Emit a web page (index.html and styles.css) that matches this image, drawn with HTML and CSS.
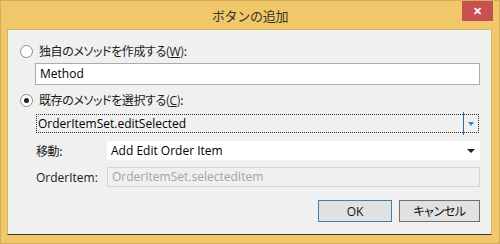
FILE: index.html
```html
<!DOCTYPE html>
<html lang="ja">
<head>
    <meta charset="UTF-8">
    <title>ボタンの追加</title>
    <link rel="stylesheet" href="styles.css">
</head>
<body>
    <div class="window">
        <div class="titlebar">
            <span class="title">ボタンの追加</span>
            <span class="close">✕</span>
        </div>
        <div class="client">
            <label class="radio-row">
                <span class="radio"></span>
                <span class="jp">独自のメソッドを作成する(<u>W</u>):</span>
            </label>
            <div class="textbox">Method</div>

            <label class="radio-row second">
                <span class="radio checked"></span>
                <span class="jp">既存のメソッドを選択する(<u>C</u>):</span>
            </label>
            <div class="combo focused">
                <span class="combo-text">OrderItemSet.editSelected</span>
                <span class="combo-btn"><span class="arrow blue"></span></span>
            </div>

            <div class="field-row move">
                <span class="field-label jp">移動:</span>
                <div class="combo plain">
                    <span class="combo-text">Add Edit Order Item</span>
                    <span class="arrow"></span>
                </div>
            </div>
            <div class="field-row item">
                <span class="field-label">OrderItem:</span>
                <div class="disabled-box">OrderItemSet.selectedItem</div>
            </div>

            <div class="buttons">
                <button class="btn default">OK</button>
                <button class="btn jp">キャンセル</button>
            </div>
        </div>
    </div>
</body>
</html>
```

FILE: styles.css
```css
body {
    margin: 0;
    font-family: "Open Sans", "Noto Sans CJK JP", sans-serif;
    font-size: 12px;
    color: #000;
}
.window {
    width: 500px;
    height: 244px;
    box-sizing: border-box;
    background: #F0C86A; /* gold frame */
    border: 1px solid #D3AD57;
    display: flex;
    flex-direction: column;
}
.titlebar {
    height: 28px;
    display: grid;
    grid-template-columns: 1fr auto 1fr;
    align-items: start;
}
.title {
    grid-column: 2;
    font-family: "Noto Sans CJK JP", sans-serif;
    font-size: 13px;
    color: #3a3226;
    line-height: 30px;
    letter-spacing: -0.3px;
}
.close {
    grid-column: 3;
    justify-self: end;
    margin-right: 6px;
    width: 31px;
    height: 20px;
    background: #C75050;
    color: #fff;
    font-size: 11px;
    font-weight: bold;
    text-align: center;
    line-height: 20px;
}
.client {
    margin: 0 7px 8px 6px;
    flex: 1;
    background: #F0F0F0;
    border: 1px solid #D7B463;
    border-bottom: 1px solid #3a3630;
    padding: 13px 11px 0 12px;
    display: flex;
    flex-direction: column;
}
.jp {
    font-family: "Noto Sans CJK JP", sans-serif;
    font-feature-settings: "palt";
    letter-spacing: -0.4px;
}
.jp u {
    font-family: "Open Sans", sans-serif;
}
.radio-row {
    height: 16px;
    display: flex;
    align-items: center;
    gap: 6px;
    color: #1a1a1a;
}
.radio-row.second {
    margin-top: 7px;
}
.radio {
    width: 11px;
    height: 11px;
    border: 1px solid #8a8a8a;
    border-radius: 50%;
    background: #fff;
    display: flex;
    align-items: center;
    justify-content: center;
}
.radio.checked::after {
    content: '';
    width: 5px;
    height: 5px;
    border-radius: 50%;
    background: #222;
}
.textbox {
    margin: 4px 0 0 15px;
    height: 22px;
    box-sizing: border-box;
    border: 1px solid #ABABAB;
    background: #fff;
    padding: 0 4px;
    line-height: 20px;
}
.combo {
    display: flex;
    align-items: center;
    box-sizing: border-box;
}
.combo.focused {
    margin: 6px 1px 0 16px;
    height: 19px;
    border: 1px dotted #333;
    background: #F0F0F0;
}
.combo-text {
    flex: 1;
    padding-left: 1px;
    white-space: nowrap;
}
.combo-btn {
    align-self: stretch;
    margin: -3px 0;
    width: 14px;
    border-left: 1px solid #2A6FAA;
    display: flex;
    align-items: center;
    justify-content: center;
}
.arrow {
    width: 0;
    height: 0;
    border-left: 4px solid transparent;
    border-right: 4px solid transparent;
    border-top: 4px solid #222;
}
.arrow.blue {
    border-left-width: 3.5px;
    border-right-width: 3.5px;
    border-top: 4px solid #3A87C8;
}
.field-row {
    display: flex;
    align-items: center;
}
.field-row.move {
    margin-top: 8px;
}
.field-row.item {
    margin-top: 7px;
}
.field-label {
    width: 87px;
    flex-shrink: 0;
    padding-left: 16px;
    box-sizing: border-box;
    color: #1a1a1a;
    white-space: nowrap;
}
.combo.plain {
    flex: 1;
    height: 19px;
    background: #fff;
    padding: 0 5px 0 3px;
}
.disabled-box {
    flex: 1;
    height: 20px;
    box-sizing: border-box;
    border: 1px solid #D5D5D5;
    background: #F0F0F0;
    color: #A3A3A3;
    padding: 0 4px;
    line-height: 18px;
}
.buttons {
    margin-top: 13px;
    display: flex;
    justify-content: flex-end;
    gap: 7px;
}
.btn {
    height: 22px;
    box-sizing: border-box;
    background: #E1E1E1;
    border: 1px solid #707070;
    font-family: "Open Sans", "Noto Sans CJK JP", sans-serif;
    font-size: 12px;
    color: #111;
    padding: 0;
    width: 81px;
}
.btn.default {
    width: 74px;
    border-color: #3C7FB1;
}
```
